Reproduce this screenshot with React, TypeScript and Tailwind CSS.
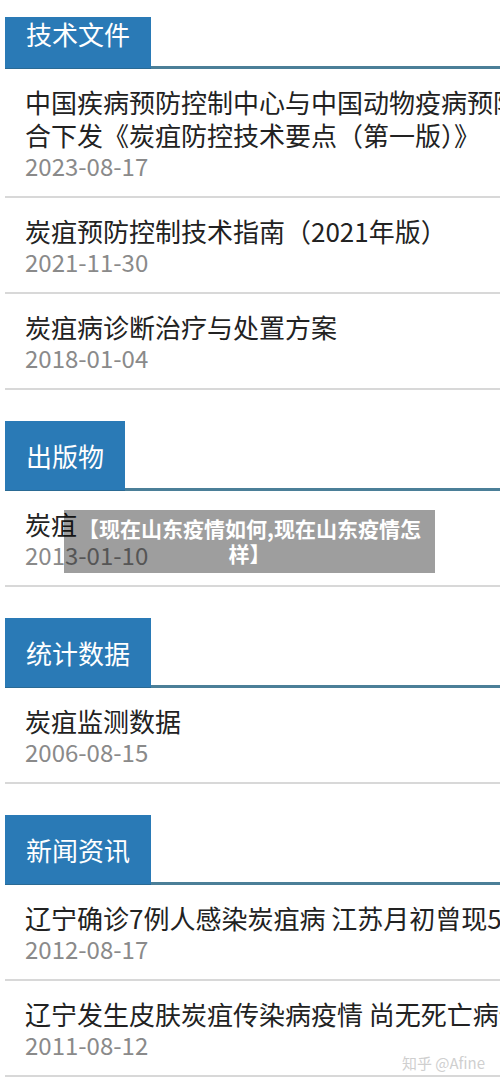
import React from "react";

type Item = { lines: string[]; date: string };
type Section = { title: string; items: Item[] };

const sections: Section[] = [
  {
    title: "技术文件",
    items: [
      {
        lines: [
          "中国疾病预防控制中心与中国动物疫病预防控制中心联",
          "合下发《炭疽防控技术要点（第一版）》",
        ],
        date: "2023-08-17",
      },
      { lines: ["炭疽预防控制技术指南（2021年版）"], date: "2021-11-30" },
      { lines: ["炭疽病诊断治疗与处置方案"], date: "2018-01-04" },
    ],
  },
  {
    title: "出版物",
    items: [{ lines: ["炭疽"], date: "2013-01-10" }],
  },
  {
    title: "统计数据",
    items: [{ lines: ["炭疽监测数据"], date: "2006-08-15" }],
  },
  {
    title: "新闻资讯",
    items: [
      { lines: ["辽宁确诊7例人感染炭疽病 江苏月初曾现5例"], date: "2012-08-17" },
      { lines: ["辽宁发生皮肤炭疽传染病疫情 尚无死亡病例"], date: "2011-08-12" },
    ],
  },
];

const font = { fontFamily: '"Noto Sans CJK SC", "Noto Sans", sans-serif' };

function Header({ title, first }: { title: string; first: boolean }) {
  return (
    <div className={`flex ${first ? "h-[52px] mt-[17px]" : "h-[70px] mt-[31px]"}`}>
      <div
        className={`bg-[#2a7ab6] pl-[21px] pr-[21px] flex border-b border-[#2a6a94] ${
          first ? "items-start" : "items-center"
        }`}
      >
        <span className="text-white text-[26px] leading-[33px] whitespace-nowrap">{title}</span>
      </div>
      <div className="flex-1 border-b-[3px] border-[#4b7f98]" />
    </div>
  );
}

function Row({ item }: { item: Item }) {
  return (
    <div className="pl-[20px] pt-[16px] pb-[15px] border-b-2 border-[#d8d8d8] w-[495px] overflow-hidden">
      {item.lines.map((l) => (
        <div key={l} className="text-[26px] leading-[33px] text-[#222222] whitespace-nowrap">
          {l}
        </div>
      ))}
      <div className="text-[24px] leading-[30px] text-[#8a8a8a] whitespace-nowrap">{item.date}</div>
    </div>
  );
}

export default function App() {
  return (
    <div className="relative w-[500px] h-[1084px] overflow-hidden bg-white" style={font}>
      <div className="pl-[5px]">
        {sections.map((s, i) => (
          <div key={s.title}>
            <Header title={s.title} first={i === 0} />
            {s.items.map((it) => (
              <Row key={it.date} item={it} />
            ))}
          </div>
        ))}
      </div>

      {/* 半透明标题遮罩 */}
      <div className="absolute left-[64px] top-[510px] w-[371px] h-[63px] bg-[rgba(0,0,0,0.38)] flex items-center justify-center px-[12px] pb-[2px]">
        <p className="text-white font-bold text-[21px] leading-[25px] text-center">
          【现在山东疫情如何,现在山东疫情怎样】
        </p>
      </div>

      {/* 水印 */}
      <div className="absolute left-[402px] top-[1053px] text-[15px] leading-[20px] text-[#cfcfcf] whitespace-nowrap">
        知乎 @Afine
      </div>
    </div>
  );
}
